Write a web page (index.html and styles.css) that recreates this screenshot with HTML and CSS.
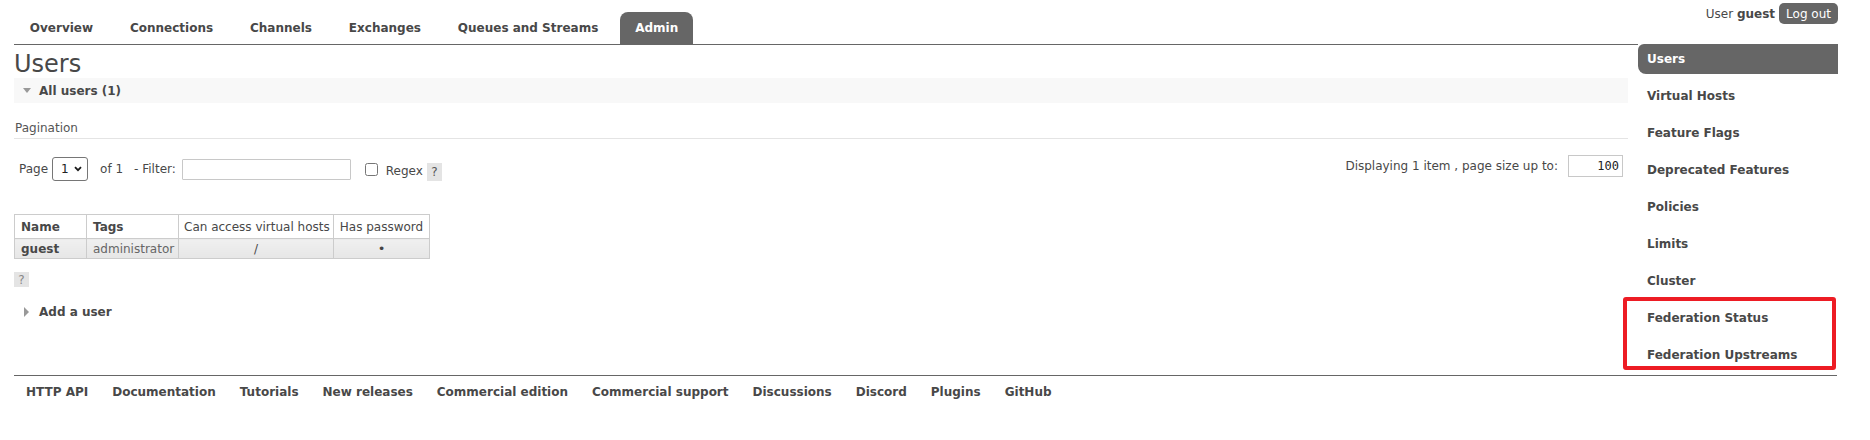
FILE: index.html
```html
<!DOCTYPE html>
<html>
<head>
<meta charset="utf-8">
<title>RabbitMQ Management</title>
<link rel="stylesheet" href="styles.css">
</head>
<body>
<div class="page">
  <header class="header">
    <div class="tabs-area">
      <ul class="tabs">
        <li><a>Overview</a></li>
        <li><a>Connections</a></li>
        <li><a>Channels</a></li>
        <li><a>Exchanges</a></li>
        <li><a>Queues and Streams</a></li>
        <li class="selected"><a>Admin</a></li>
      </ul>
    </div>
    <div class="login">
      <span>User <b>guest</b></span>
      <button class="logout">Log out</button>
    </div>
  </header>

  <div class="body-row">
    <main class="content">
      <h1>Users</h1>
      <h2 class="sec-head shown"><span class="tri-down"></span>All users (1)</h2>

      <div class="pagination">
        <div class="pag-title">Pagination</div>
        <div class="pag-row">
          <div class="pag-left">
            <span>Page</span>
            <span class="select-wrap">
              <select class="page-select"><option>1</option></select>
              <svg class="chev" width="8" height="6" viewBox="0 0 8 6"><path d="M1 1.2 L4 4.2 L7 1.2" fill="none" stroke="#1a1a1a" stroke-width="1.8"/></svg>
            </span>
            <span class="of">of 1</span>
            <span class="filter-label">- Filter:</span>
            <input class="filter" type="text">
            <input class="regex-box" type="checkbox">
            <span class="regex-label">Regex</span>
            <span class="help help-inline">?</span>
          </div>
          <div class="pag-right">
            <span>Displaying 1 item , page size up to:</span>
            <input class="page-size" type="text" value="100">
          </div>
        </div>
      </div>

      <table class="list">
        <colgroup>
          <col class="c-name"><col class="c-tags"><col class="c-vh"><col class="c-pw">
        </colgroup>
        <thead>
          <tr>
            <th class="sort left">Name</th>
            <th class="sort left">Tags</th>
            <th>Can access virtual hosts</th>
            <th>Has password</th>
          </tr>
        </thead>
        <tbody>
          <tr>
            <td class="left"><b>guest</b></td>
            <td class="left tag">administrator</td>
            <td class="center">/</td>
            <td class="center dot">&#8226;</td>
          </tr>
        </tbody>
      </table>

      <div class="help help-block">?</div>

      <h2 class="sec-head hidden"><span class="tri-right"></span>Add a user</h2>
    </main>

    <nav class="menu">
      <ul>
        <li class="selected"><a>Users</a></li>
        <li><a>Virtual Hosts</a></li>
        <li><a>Feature Flags</a></li>
        <li><a>Deprecated Features</a></li>
        <li><a>Policies</a></li>
        <li><a>Limits</a></li>
        <li><a>Cluster</a></li>
        <li><a>Federation Status</a></li>
        <li><a>Federation Upstreams</a></li>
      </ul>
    </nav>
  </div>

  <footer class="footer">
    <ul>
      <li><a>HTTP API</a></li>
      <li><a>Documentation</a></li>
      <li><a>Tutorials</a></li>
      <li><a>New releases</a></li>
      <li><a>Commercial edition</a></li>
      <li><a>Commercial support</a></li>
      <li><a>Discussions</a></li>
      <li><a>Discord</a></li>
      <li><a>Plugins</a></li>
      <li><a>GitHub</a></li>
    </ul>
  </footer>

  <div class="highlight"></div>
</div>
</body>
</html>
```

FILE: styles.css
```css
* { box-sizing: border-box; }

body {
  margin: 0;
  background: #fff;
  color: #484848;
  font-family: Verdana, "DejaVu Sans", sans-serif;
  font-size: 12px;
}

.page {
  position: relative;
  width: 1824px;
  margin-left: 14px;
}

/* header */
.header {
  display: grid;
  grid-template-columns: 1624px 200px;
  height: 45px;
}
.tabs-area {
  display: flex;
  align-items: flex-end;
  border-bottom: 1px solid #666;
}
.tabs {
  list-style: none;
  margin: 0 0 0 1px;
  padding: 0;
  display: flex;
  gap: 7.3px;
}
.tabs a {
  display: block;
  padding: 0 14.8px;
  line-height: 32px;
  font-weight: bold;
  color: #484848;
  border-radius: 8px 8px 0 0;
}
.tabs .selected a {
  background: #666;
  color: #fff;
}
.login {
  display: flex;
  justify-content: flex-end;
  align-items: center;
  gap: 4px;
  height: 21px;
  margin-top: 3px;
}
.logout {
  height: 21px;
  padding: 0 7px;
  border: 0;
  border-radius: 5px;
  background: #666;
  color: #fff;
  font-family: Verdana, "DejaVu Sans", sans-serif;
  font-size: 12px;
}

/* body */
.body-row {
  display: grid;
  grid-template-columns: 1614px 200px;
  column-gap: 10px;
}

h1 {
  margin: 5px 0 0;
  font-size: 24px;
  line-height: 28px;
  font-weight: normal;
  color: #484848;
}

.sec-head {
  display: flex;
  align-items: center;
  height: 25px;
  margin: 0;
  padding-left: 8px;
  font-size: 12px;
  font-weight: bold;
  color: #484848;
}
.sec-head.shown { background: #f8f8f8; }
.sec-head.hidden { margin-top: 12px; }

.tri-down, .tri-right {
  display: flex;
  justify-content: center;
  align-items: center;
  width: 9px;
  height: 10px;
  margin-right: 8px;
}
.tri-down::before {
  content: "";
  border-left: 4px solid transparent;
  border-right: 4px solid transparent;
  border-top: 5px solid #999;
}
.tri-right::before {
  content: "";
  border-top: 5px solid transparent;
  border-bottom: 5px solid transparent;
  border-left: 5px solid #999;
}

/* pagination */
.pagination { margin-top: 17px; }
.pag-title {
  line-height: 16px;
  padding: 0 0 2px 1px;
  border-bottom: 1px solid #e4e4e4;
  color: #555;
}
.pag-row {
  display: flex;
  justify-content: space-between;
  align-items: flex-start;
  margin-top: 16px;
}
.pag-left {
  display: flex;
  align-items: center;
  height: 24px;
  margin-top: 2px;
  padding-left: 5px;
}
.select-wrap {
  position: relative;
  display: block;
  margin-left: 4px;
}
.page-select {
  display: block;
  appearance: none;
  -webkit-appearance: none;
  width: 36px;
  height: 24px;
  margin: 0;
  padding: 0 0 0 8px;
  border: 1px solid #767676;
  border-radius: 3px;
  background: #fff;
  color: #222;
  font-family: Verdana, "DejaVu Sans", sans-serif;
  font-size: 12px;
}
.chev {
  position: absolute;
  right: 6px;
  top: 9px;
}
.of { margin-left: 12px; }
.filter-label { margin-left: 11px; }
.filter {
  width: 169px;
  height: 21px;
  margin: 0 0 0 6px;
  border: 1px solid #c8c8c8;
  border-radius: 1px;
}
.regex-box {
  width: 13px;
  height: 13px;
  margin: 0 0 0 14px;
}
.regex-label {
  margin-left: 8px;
  margin-top: 4px;
}
.help {
  display: flex;
  justify-content: center;
  align-items: center;
  background: #e4e4e4;
  color: #555;
}
.help-inline {
  width: 15px;
  height: 18px;
  margin-left: 4px;
  margin-top: 6px;
}
.pag-right {
  display: flex;
  align-items: center;
  height: 22px;
  margin-right: 5px;
}
.page-size {
  width: 55px;
  height: 22px;
  margin: 0 0 0 10px;
  padding: 0 3px 0 0;
  border: 1px solid #c8c8c8;
  text-align: right;
  font-family: "DejaVu Sans Mono", monospace;
  font-size: 12px;
  color: #222;
}

/* table */
.list {
  margin-top: 33px;
  width: 415px;
  table-layout: fixed;
  border-collapse: collapse;
}
.c-name { width: 72px; }
.c-tags { width: 92px; }
.c-vh { width: 155px; }
.c-pw { width: 96px; }
.list th, .list td {
  border: 1px solid #ccc;
  padding: 0 5px;
  white-space: nowrap;
  overflow: hidden;
}
.list th {
  height: 24px;
  font-weight: normal;
  background: #fff;
  text-align: center;
}
.list th.sort { font-weight: bold; }
.list .left { text-align: left; padding-left: 6px; }
.list td {
  height: 20px;
  background: linear-gradient(#f0f0f0, #e6e6e6);
}
.list .center { text-align: center; }
.list .tag { color: #666; }
.list .dot { font-size: 13px; color: #444; }

.help-block {
  width: 15px;
  height: 15px;
  margin-top: 13px;
  color: #888;
}

/* sidebar menu */
.menu ul {
  list-style: none;
  margin: -1px 0 0;
  padding: 0;
  display: flex;
  flex-direction: column;
  gap: 7px;
}
.menu a {
  display: block;
  height: 30px;
  line-height: 30px;
  padding-left: 9px;
  font-weight: bold;
  color: #484848;
}
.menu .selected a {
  background: #666;
  color: #fff;
  border-radius: 6px 0 0 8px;
}

/* footer */
.footer {
  margin-top: 5px;
  border-top: 1px solid #666;
  width: 1823px;
}
.footer ul {
  list-style: none;
  margin: 0;
  padding: 6px 0 0;
  display: flex;
}
.footer a {
  display: block;
  padding: 0 12px;
  line-height: 20px;
  font-weight: bold;
  color: #484848;
}

/* annotation */
.highlight {
  position: absolute;
  left: 1609px;
  top: 297px;
  width: 213px;
  height: 73px;
  border: 4px solid #ed1c24;
  border-radius: 3px;
}
```
